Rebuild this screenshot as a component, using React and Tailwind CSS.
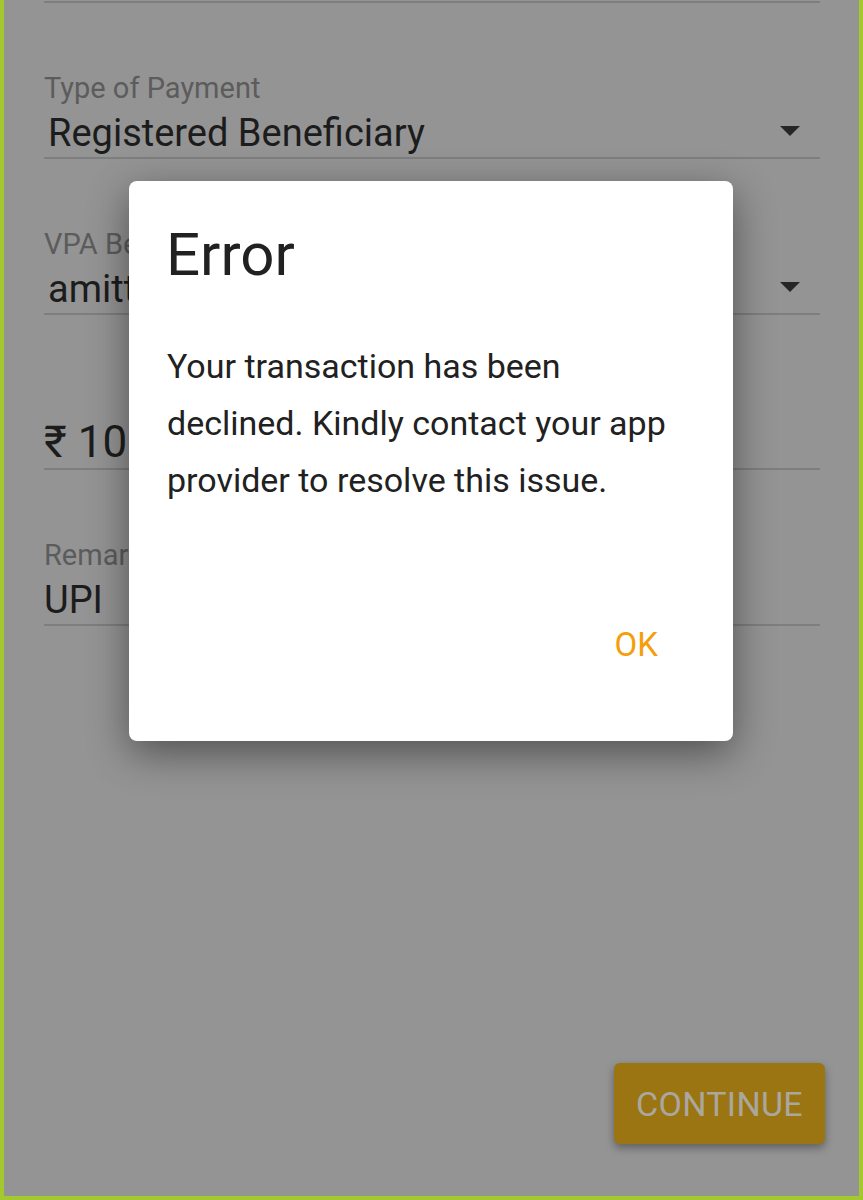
import React from "react";

function Arrow() {
  return (
    <svg width="20" height="10" viewBox="0 0 20 10" className="shrink-0">
      <path d="M0 0 L20 0 L10 10 Z" fill="#262626" />
    </svg>
  );
}

function Field({ label, value, dropdown, pad = true }) {
  return (
    <div className="pt-[69px] pb-[2px] border-b-2 border-[#7e7e7e]">
      <div className="text-[29px] leading-[32px] h-[32px] text-[#5c5c5c] whitespace-nowrap">{label}</div>
      <div className="mt-[7px] h-[44px] flex items-center justify-between">
        <span className={pad ? "text-[38px] leading-[44px] text-[#1c1c1c] whitespace-nowrap pl-[4px]" : "text-[38px] leading-[44px] text-[#1c1c1c] whitespace-nowrap"}>{value}</span>
        {dropdown && (
          <span className="mr-[20px] -mt-[4px] flex">
            <Arrow />
          </span>
        )}
      </div>
    </div>
  );
}

export default function App() {
  return (
    <div
      className="relative h-[1200px] w-full overflow-hidden bg-[#949494] border-l-4 border-r-4 border-b-4 border-[#a3c92e] flex flex-col"
      style={{ fontFamily: "Roboto, 'Noto Sans', sans-serif" }}
    >
      <div className="pl-[40px] pr-[39px]">
        <div className="h-[3px] border-b-2 border-[#7e7e7e]" />
        <Field label="Type of Payment" value="Registered Beneficiary" dropdown />
        <Field label="VPA Beneficiary" value="amittest@upi" dropdown />
        <div className="pt-[101px] border-b-2 border-[#7e7e7e]">
          <div className="h-[52px] text-[44px] leading-[52px] text-[#1c1c1c] whitespace-nowrap">₹ 100</div>
        </div>
        <Field label="Remarks" value="UPI" pad={false} />
      </div>

      <div className="flex-1" />

      <div className="flex justify-end pr-[34px] pb-[52px]">
        <div className="w-[211px] h-[81px] rounded-[6px] bg-[#9b7512] shadow-[0_4px_8px_rgba(0,0,0,0.35)] flex items-center justify-center">
          <span className="text-[34px] leading-[40px] text-[#aaa79f] tracking-[0.3px]">CONTINUE</span>
        </div>
      </div>

      <div className="absolute left-[125px] top-[181px] w-[604px] h-[560px] bg-white rounded-[8px] shadow-[0_12px_40px_rgba(0,0,0,0.45)] flex flex-col pl-[38px]">
        <div className="pt-[38px] text-[60px] leading-[72px] h-[110px] text-[#212121] -ml-[1px]">Error</div>
        <div className="mt-[47px] text-[34px] leading-[57px] text-[#212121] whitespace-nowrap">
          Your transaction has been
          <br />
          declined. Kindly contact your app
          <br />
          provider to resolve this issue.
        </div>
        <div className="mt-[116px] flex justify-end pr-[75px]">
          <span className="text-[33px] leading-[40px] text-[#f59e0b]">OK</span>
        </div>
      </div>
    </div>
  );
}
